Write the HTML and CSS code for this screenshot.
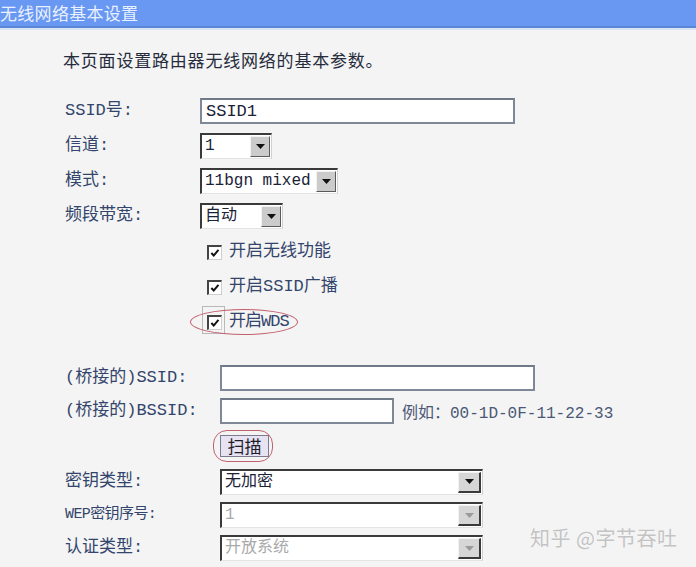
FILE: index.html
```html
<!DOCTYPE html>
<html lang="zh-CN">
<head>
<meta charset="utf-8">
<title>无线网络基本设置</title>
<link rel="stylesheet" href="styles.css">
</head>
<body>
<div class="titlebar">无线网络基本设置</div>
<div class="content">
  <p class="intro">本页面设置路由器无线网络的基本参数。</p>

  <div class="form form-basic">
    <div class="lbl">SSID号:</div>
    <div class="field"><input class="textbox w-ssid" type="text" value="SSID1"></div>

    <div class="lbl">信道:</div>
    <div class="field">
      <div class="select w-ch"><span class="val">1</span><span class="btn"><svg width="9" height="5" viewBox="0 0 9 5"><path d="M0 0h9L4.5 5z" fill="#111"/></svg></span></div>
    </div>

    <div class="lbl">模式:</div>
    <div class="field">
      <div class="select w-mode"><span class="val">11bgn mixed</span><span class="btn"><svg width="9" height="5" viewBox="0 0 9 5"><path d="M0 0h9L4.5 5z" fill="#111"/></svg></span></div>
    </div>

    <div class="lbl">频段带宽:</div>
    <div class="field">
      <div class="select w-band"><span class="val">自动</span><span class="btn"><svg width="9" height="5" viewBox="0 0 9 5"><path d="M0 0h9L4.5 5z" fill="#111"/></svg></span></div>
    </div>
  </div>

  <div class="checks">
    <div class="check"><span class="box"><svg width="10" height="10" viewBox="0 0 11 11"><path d="M1.5 5.5l2.6 2.8 5.2-6.3" fill="none" stroke="#111" stroke-width="2.2"/></svg></span><span>开启无线功能</span></div>
    <div class="check"><span class="box"><svg width="10" height="10" viewBox="0 0 11 11"><path d="M1.5 5.5l2.6 2.8 5.2-6.3" fill="none" stroke="#111" stroke-width="2.2"/></svg></span><span>开启SSID广播</span></div>
    <div class="check check-wds"><span class="focus-frame"></span><span class="box"><svg width="10" height="10" viewBox="0 0 11 11"><path d="M1.5 5.5l2.6 2.8 5.2-6.3" fill="none" stroke="#111" stroke-width="2.2"/></svg></span><span class="wds-text">开启WDS</span><span class="ring ring-wds"></span></div>
  </div>

  <div class="form form-wds">
    <div class="lbl">(桥接的)SSID:</div>
    <div class="field"><input class="textbox w-bssid-name" type="text" value=""></div>

    <div class="lbl">(桥接的)BSSID:</div>
    <div class="field field-inline"><input class="textbox w-bssid" type="text" value=""><span class="hint">例如：00-1D-0F-11-22-33</span></div>

    <div class="lbl"></div>
    <div class="field"><span class="scan-wrap"><button class="scan" type="button">扫描</button><span class="ring ring-scan"></span></span></div>

    <div class="lbl">密钥类型:</div>
    <div class="field">
      <div class="select w-wide"><span class="val">无加密</span><span class="btn btn-3d"><svg width="9" height="5" viewBox="0 0 9 5"><path d="M0 0h9L4.5 5z" fill="#111"/></svg></span></div>
    </div>

    <div class="lbl lbl-small">WEP密钥序号:</div>
    <div class="field">
      <div class="select w-wide disabled"><span class="val">1</span><span class="btn btn-3d"><svg width="9" height="5" viewBox="0 0 9 5"><path d="M0 0h9L4.5 5z" fill="#9a9a9a"/></svg></span></div>
    </div>

    <div class="lbl">认证类型:</div>
    <div class="field">
      <div class="select w-wide disabled"><span class="val">开放系统</span><span class="btn btn-3d"><svg width="9" height="5" viewBox="0 0 9 5"><path d="M0 0h9L4.5 5z" fill="#9a9a9a"/></svg></span></div>
    </div>
  </div>
</div>
<div class="watermark">知乎 @字节吞吐</div>
</body>
</html>
```

FILE: styles.css
```css
html, body {
  margin: 0;
  padding: 0;
}

body {
  width: 696px;
  height: 567px;
  overflow: hidden;
  position: relative;
  background: #f4f4f4;
  font-family: "Liberation Mono", "Noto Sans CJK SC", monospace;
  font-size: 17px;
  color: #34466a;
}

.titlebar {
  box-sizing: border-box;
  height: 28px;
  padding-top: 1px;
  background: #6898f2;
  border-bottom: 2px solid #5a86d6;
  box-shadow: 0 2px 0 #d9e4f4;
  color: #e9f0ff;
  font-family: "Noto Sans CJK SC", sans-serif;
  font-size: 17px;
  line-height: 24px;
  letter-spacing: 0.3px;
  white-space: nowrap;
}

.content {
  padding-left: 65px;
}

.intro {
  margin: 22px 0 0 -2px;
  line-height: 20px;
  font-family: "Noto Sans CJK SC", sans-serif;
  font-size: 17px;
  letter-spacing: 0.8px;
  color: #262c3c;
}

.form {
  display: grid;
  align-items: center;
}

.form-basic {
  margin-top: 28px;
  grid-template-columns: 135px auto;
  grid-template-rows: 26px 26px 26px 25px;
  row-gap: 9px;
}

.form-wds {
  margin-top: 31px;
  grid-template-columns: 155px auto;
  grid-template-rows: 26px 26px 30px 27px 26px 26px;
  row-gap: 7px;
}

.lbl {
  line-height: 22px;
  white-space: nowrap;
  color: #33456c;
}

.lbl-small {
  font-size: 15px;
  letter-spacing: -0.6px;
}

.field {
  display: flex;
  align-items: center;
  height: 100%;
}

.field-inline {
  gap: 8px;
}

.textbox {
  box-sizing: border-box;
  height: 26px;
  margin: 0;
  padding: 0 0 0 4px;
  border: 2px solid #7e8896;
  border-top-color: #6f7987;
  background: #fff;
  font-family: "Liberation Mono", "Noto Sans CJK SC", monospace;
  font-size: 17px;
  color: #1a2236;
  outline: none;
}

.w-ssid { width: 315px; }
.w-bssid-name { width: 315px; }
.w-bssid { width: 174px; }

.hint {
  color: #4a5876;
  font-size: 16px;
  white-space: nowrap;
}

.select {
  box-sizing: border-box;
  display: flex;
  height: 26px;
  background: #fff;
  border-top: 2px solid #3a3a3a;
  border-left: 2px solid #3a3a3a;
  border-right: 1px solid #d0d0d0;
  border-bottom: 1px solid #e4e4e4;
}

.select .val {
  flex: 1;
  padding-left: 3px;
  line-height: 22px;
  font-size: 16px;
  color: #1a2236;
  white-space: nowrap;
  overflow: hidden;
}

.select .btn {
  box-sizing: border-box;
  width: 20px;
  margin: 1px 1px 1px 0;
  background: #cbcbcb;
  border-top: 1px solid #f2f2f2;
  border-left: 1px solid #f2f2f2;
  border-right: 1px solid #5a5a5a;
  border-bottom: 1px solid #5a5a5a;
  display: flex;
  align-items: center;
  justify-content: center;
}

.select .btn-3d {
  width: 23px;
  background: #d6d6d6;
  border-right: 2px solid #3a3a3a;
  border-bottom: 2px solid #3a3a3a;
}

.select.disabled .val {
  color: #a9a9a9;
}

.w-ch { width: 72px; }
.w-mode { width: 138px; }
.w-band { width: 83px; }
.w-wide { width: 263px; }

.checks {
  margin: 12px 0 0 142px;
  display: flex;
  flex-direction: column;
  gap: 11px;
}

.check {
  position: relative;
  display: flex;
  align-items: center;
  gap: 7px;
  height: 24px;
  line-height: 22px;
  white-space: nowrap;
  color: #33456c;
}

.box {
  box-sizing: border-box;
  width: 15px;
  height: 15px;
  background: #fff;
  border-top: 2px solid #444;
  border-left: 2px solid #444;
  border-right: 1px solid #cfcfcf;
  border-bottom: 1px solid #cfcfcf;
  display: flex;
  align-items: center;
  justify-content: center;
}

.wds-text {
  letter-spacing: -1px;
}

.focus-frame {
  position: absolute;
  left: -5px;
  top: -4px;
  width: 23px;
  height: 28px;
  border: 1px solid #b9b9b9;
  box-sizing: border-box;
}

.ring {
  position: absolute;
  box-sizing: border-box;
  border: 1.5px solid #c2606e;
  pointer-events: none;
}

.ring-wds {
  left: -17px;
  top: -1px;
  width: 108px;
  height: 26px;
  border-radius: 50%;
}

.scan-wrap {
  position: relative;
  display: inline-block;
}

.scan {
  display: block;
  box-sizing: border-box;
  width: 49px;
  height: 22px;
  margin: 0;
  padding: 0;
  background: #e7e3f3;
  border: 1px solid #7c7a8c;
  font-family: "Noto Sans CJK SC", sans-serif;
  font-size: 17px;
  line-height: 18px;
  color: #1c1c2a;
}

.ring-scan {
  left: -7px;
  top: -5px;
  width: 60px;
  height: 32px;
  border-radius: 14px;
}

.watermark {
  position: absolute;
  left: 530px;
  top: 526px;
  font-family: "Noto Sans CJK SC", sans-serif;
  font-size: 20px;
  line-height: 24px;
  color: #c3c3c3;
  text-shadow: 0 0 1px #fff;
  white-space: nowrap;
  letter-spacing: 0.5px;
}
```
